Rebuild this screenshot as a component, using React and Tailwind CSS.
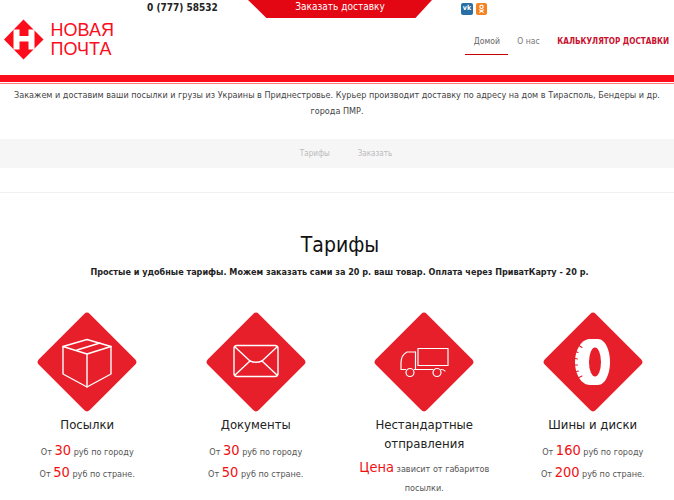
const font = { fontFamily: '"DejaVu Sans Condensed","DejaVu Sans",sans-serif' };

function Diamond({ children }) {
  return (
    <svg width="104" height="104" viewBox="-52 -52 104 104" className="block mx-auto">
      <rect x="-36" y="-36" width="72" height="72" rx="4" transform="rotate(45)" fill="#e71f2b" />
      <g fill="none" stroke="#fff" strokeWidth="1.4" strokeLinejoin="round" strokeLinecap="round">{children}</g>
    </svg>
  );
}

const BoxIcon = () => (
  <Diamond>
    <path d="M-24 -15.5 L0 -22.5 L24 -15.5 L0 -8 Z" />
    <path d="M-24 -15.5 V12 L0 25 L24 12 V-15.5" />
    <path d="M0 -8 V25" />
    <path d="M-10 -12 L13 -19" />
  </Diamond>
);
const MailIcon = () => (
  <Diamond>
    <rect x="-22" y="-16.5" width="44" height="31" rx="3" />
    <path d="M-21 -15 L-6 -1 Q0 1.5 6 -1 L21 -15" />
    <path d="M-6 -1 L-21 13 M6 -1 L21 13" />
  </Diamond>
);
const TruckIcon = () => (
  <Diamond>
    <g strokeWidth="1.2">
      <rect x="-6" y="-13.5" width="30" height="17" />
      <path d="M-8.5 -10 H-17 Q-23 -7 -23 1 V7.5 H-18.5" />
      <path d="M-8.5 -10 V7.5" />
      <circle cx="-14" cy="10.5" r="4" />
      <circle cx="13" cy="10.5" r="4" />
      <path d="M-9.5 7.5 H9 M17 7.5 Q20 7.5 21 9" />
    </g>
  </Diamond>
);
const TireIcon = () => (
  <Diamond>
    <g stroke="none" fill="#fff">
      <path d="M-4 -23 C-12 -22 -18 -12 -18 0 C-18 12 -12 23 -3 23 H5 C12 23 17 12 17 0 C17 -12 12 -23 5 -23 Z" />
      <ellipse cx="2" cy="0" rx="6" ry="14.5" fill="#e71f2b" />
      <path d="M-19 -11 L-15 -9.5 M-20 -4 L-15.5 -3 M-20 3 L-15.5 3 M-19 10 L-14.5 9 M-15 16 L-11 14 M-15 -17 L-11 -14.5" stroke="#e71f2b" strokeWidth="1.1" fill="none" />
    </g>
  </Diamond>
);

const R = ({ children }) => <span className="text-[14.5px] leading-none text-[#f01010]">{children}</span>;

function Price({ a, b }) {
  return (
    <div className="text-[9px] text-[#555]">
      <p className="h-[22px] leading-[22px]">От <R>{a}</R> руб по городу</p>
      <p className="h-[22px] leading-[22px]">От <R>{b}</R> руб по стране.</p>
    </div>
  );
}

function Card({ icon, title, children }) {
  return (
    <div className="flex flex-col items-center text-center w-[168.5px]">
      {icon}
      <h3 className="mt-[1px] text-[13px] leading-[19px] text-[#222]">{title}</h3>
      <div className="mt-[7px]">{children}</div>
    </div>
  );
}

export default function App() {
  return (
    <div style={font} className="w-[674px] h-[500px] overflow-hidden bg-white">
      <div className="flex h-[18px]">
        <span className="ml-[147px] w-[101px] text-[10px] leading-[15px] font-bold text-[#222]">0 (777) 58532</span>
        <div className="w-[184px] h-[18px] bg-[#e30613] text-white text-[10px] leading-[13px] text-center [clip-path:polygon(0_0,100%_0,91%_100%,10%_100%)]">Заказать доставку</div>
        <div className="flex gap-[3px] ml-[29px] mt-[3px]">
          <span className="w-[12px] h-[12px] rounded-[2px] bg-[#2a6fa3] text-white text-[7px] leading-[11px] font-bold text-center">vk</span>
          <svg width="11" height="12" viewBox="0 0 11 12" className="block">
            <rect width="11" height="12" rx="2" fill="#f58220" />
            <circle cx="5.5" cy="3.8" r="1.7" fill="none" stroke="#fff" strokeWidth="1.1" />
            <path d="M3 6.6 Q5.5 8.2 8 6.6 M5.5 7.5 L3.4 10 M5.5 7.5 L7.6 10" fill="none" stroke="#fff" strokeWidth="1.1" />
          </svg>
        </div>
      </div>

      <header className="flex justify-between h-[57px]">
        <div className="flex items-start mt-[1px] ml-[4px]">
          <svg width="40" height="41" viewBox="0 0 40 41" className="block">
            <path d="M19.5 0.5 L39.5 20.5 L19.5 40.5 L0 20.5 Z" fill="#fb0d1b" />
            <path d="M9.5 10.5 H15.5 V17 H24.5 V10.5 H30.5 V30.5 H24.5 V22.5 H15.5 V30.5 H9.5 Z" fill="#fff" />
          </svg>
          <div className="ml-[6.5px] mt-[2px] text-[18px] leading-[19px] text-[#fb0d1b] [font-family:'Liberation_Sans',sans-serif]">НОВАЯ<br />ПОЧТА</div>
        </div>
        <nav className="flex items-start text-[8.5px] mt-[18px] mr-[5px]">
          <a className="w-[43px] h-[18px] text-center leading-[11px] text-[#666] border-b border-[#c00] box-content">Домой</a>
          <a className="ml-[9px] w-[23px] leading-[11px] text-[#777]">О нас</a>
          <a className="ml-[17px] text-[8.1px] leading-[11px] font-bold text-[#c8102e]">КАЛЬКУЛЯТОР ДОСТАВКИ</a>
        </nav>
      </header>

      <div className="h-[7px] bg-[#fb0d1b]" />
      <div className="h-[1px] bg-white" />
      <div className="h-[1px] bg-[#f77]" />

      <p className="mt-[1px] w-[660px] mx-auto text-center text-[9px] leading-[16px] text-[#444] pt-[2px]">
        Закажем и доставим ваши посылки и грузы из Украины в Приднестровье. Курьер производит доставку по адресу на дом в Тирасполь, Бендеры и др. города ПМР.
      </p>

      <div className="mt-[20px] h-[29px] bg-[#f6f6f6] flex justify-center items-center gap-[28px] pl-[18px] text-[8px] text-[#bbb]">
        <span>Тарифы</span>
        <span>Заказать</span>
      </div>

      <div className="mt-[24px] border-t border-[#f0f0f0]" />

      <h2 className="mt-[37px] pl-[6px] text-center text-[21px] leading-[30px] text-[#111]">Тарифы</h2>
      <p className="mt-[5px] pl-[5px] text-center text-[9px] leading-[14px] font-bold text-[#222]">
        Простые и удобные тарифы. Можем заказать сами за 20 р. ваш товар. Оплата через ПриватКарту - 20 р.
      </p>

      <div className="flex w-[674px] ml-[3px] mt-[31px]">
        <Card icon={<BoxIcon />} title="Посылки"><Price a="30" b="50" /></Card>
        <Card icon={<MailIcon />} title="Документы"><Price a="30" b="50" /></Card>
        <Card icon={<TruckIcon />} title={<>Нестандартные<br />отправления</>}>
          <div className="w-[150px] text-[9px] leading-[19px] text-[#555]"><R>Цена</R> зависит от габаритов посылки.</div>
        </Card>
        <Card icon={<TireIcon />} title="Шины и диски"><Price a="160" b="200" /></Card>
      </div>
    </div>
  );
}
